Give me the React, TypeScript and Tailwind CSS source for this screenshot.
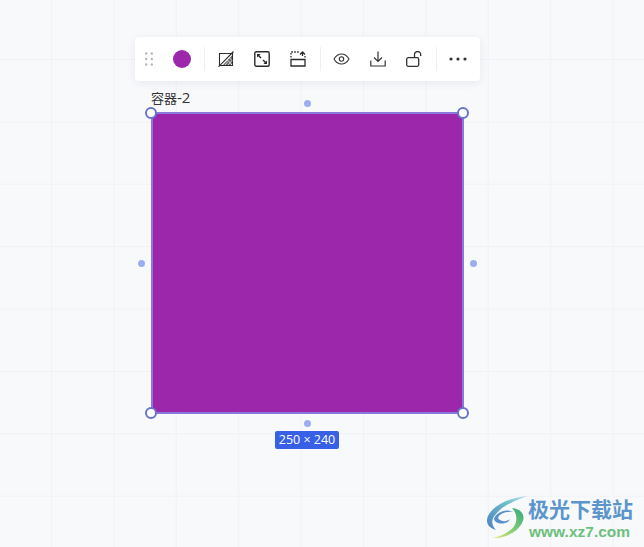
const Sep = ({ cls }: { cls: string }) => <div className={`w-px h-[24px] bg-[#eeeff2] ${cls}`} />;

const ringBase = "absolute w-[12px] h-[12px] rounded-full bg-white border-2 border-[#6674cc]";
const dotBase = "absolute w-[7px] h-[7px] rounded-full bg-[#9daef0]";

export default function App() {
  return (
    <div
      className="relative w-[644px] h-[547px] overflow-hidden flex flex-col items-start pl-[135px] pt-[37px] bg-[#f8f9fb] bg-[linear-gradient(to_right,#f1f2f5_1px,transparent_1px),linear-gradient(to_bottom,#f1f2f5_1px,transparent_1px)] bg-[size:62.4px_62.4px] bg-[position:51px_59px]"
      style={{ fontFamily: '"Open Sans","Noto Sans CJK SC",sans-serif' }}
    >
      {/* toolbar */}
      <div className="w-[345px] h-[44px] shrink-0 flex items-center pl-[10px] bg-white rounded-[4px] shadow-[0_2px_8px_rgba(30,40,80,0.08)]">
        <svg className="w-[8px] h-[14px]" viewBox="0 0 8 14" fill="#b4b7bd">
          <circle cx="1.2" cy="1.5" r="1.2" /><circle cx="6.8" cy="1.5" r="1.2" />
          <circle cx="1.2" cy="7" r="1.2" /><circle cx="6.8" cy="7" r="1.2" />
          <circle cx="1.2" cy="12.5" r="1.2" /><circle cx="6.8" cy="12.5" r="1.2" />
        </svg>
        <div className="ml-[20px] w-[18px] h-[18px] rounded-full bg-[#9c27ab]" />
        <Sep cls="ml-[13px]" />
        <div className="ml-[13px] flex items-center gap-[20px]">
          <svg className="w-[16px] h-[16px]" viewBox="0 0 16 16" fill="none" stroke="#2b2b2b" strokeWidth="1.1">
            <path d="M1.500 2.500h13v12h-13z" />
            <path d="M0.500 15.800 15.500 0.500" />
            <path d="M14 4.500 5 14h9z" fill="#666" stroke="none" />
            <path d="M7 14l3-3.500M10 14l4-4.500M13 14l1-1M9 8.500l5 5.500M11 6.500l3 3" stroke="#fff" strokeWidth="0.7" />
          </svg>
          <svg className="w-[16px] h-[16px]" viewBox="0 0 16 16" fill="none" stroke="#2b2b2b" strokeWidth="1.4">
            <rect x="0.800" y="0.800" width="14.400" height="14.400" rx="1.500" />
            <path d="M4 4 7 7" />
            <path d="M3 3h3.600L3 6.600zM13 13H9.400L13 9.400z" fill="#2b2b2b" stroke="none" />
            <path d="M12 12 9 9" />
          </svg>
          <svg className="w-[16px] h-[16px]" viewBox="0 0 16 16" fill="none" stroke="#2b2b2b" strokeWidth="1.300">
            <path d="M1 6.500V1h8" strokeDasharray="1.600 1.300" />
            <path d="M1 8.500V15h14V8.500z" />
            <path d="M15 6.500V5" />
            <path d="M10 3.500 12.500 1 15 3.500M12.500 1.200V5" />
          </svg>
        </div>
        <Sep cls="ml-[14px]" />
        <div className="ml-[12px] flex items-center gap-[20px]">
          <svg className="w-[17px] h-[16px]" viewBox="0 0 17 16" fill="none" stroke="#333" strokeWidth="1.100">
            <path d="M1 8c2-3.400 4.500-5 7.500-5S14 4.600 16 8c-2 3.400-4.500 5-7.500 5S3 11.400 1 8z" />
            <circle cx="8.500" cy="8" r="2.200" />
          </svg>
          <svg className="w-[16px] h-[16px]" viewBox="0 0 16 16" fill="none" stroke="#333" strokeWidth="1.200">
            <path d="M8 0.500V10M4 6.500 8 10.500l4-4" />
            <path d="M0.800 9.500V15h14.400V9.500" />
          </svg>
          <svg className="w-[16px] h-[16px]" viewBox="0 0 16 16" fill="none" stroke="#333" strokeWidth="1.300">
            <rect x="0.700" y="6.700" width="12" height="8.600" rx="1.500" />
            <path d="M8.500 6.700V3.600a3.100 3.100 0 0 1 6.200 0v1.400" />
          </svg>
        </div>
        <Sep cls="ml-[14px]" />
        <svg className="ml-[12px] w-[18px] h-[4px]" viewBox="0 0 18 4" fill="#333">
          <circle cx="2" cy="2" r="1.600" /><circle cx="9" cy="2" r="1.600" /><circle cx="16" cy="2" r="1.600" />
        </svg>
      </div>

      {/* label */}
      <div className="ml-[16px] mt-[8px] mb-[4px] h-[19px] text-[13px] leading-[18px] text-[#333] whitespace-nowrap">
        容器<span className="text-[15px] leading-none">-2</span>
      </div>

      {/* selected container with its handles */}
      <div className="relative ml-[16px] w-[313px] h-[302px] shrink-0 bg-[#9c27ab] border-2 border-[#8a78dc]">
        <div className={`${ringBase} -left-[8px] -top-[7px]`} />
        <div className={`${ringBase} -right-[7px] -top-[7px]`} />
        <div className={`${ringBase} -left-[8px] -bottom-[7px]`} />
        <div className={`${ringBase} -right-[7px] -bottom-[7px]`} />
        <div className={`${dotBase} left-[151px] -top-[14px]`} />
        <div className={`${dotBase} left-[151px] -bottom-[15px]`} />
        <div className={`${dotBase} -left-[15px] top-[146px]`} />
        <div className={`${dotBase} -right-[15px] top-[146px]`} />
      </div>

      {/* size tag */}
      <div className="ml-[140px] mt-[17px] w-[64px] h-[18px] flex items-center justify-center rounded-[2px] bg-[#3860e6] text-white text-[12.500px] leading-none whitespace-nowrap">
        250 × 240
      </div>

      {/* watermark */}
      <div className="absolute left-[484px] top-[495px] flex items-start">
        <svg className="w-[44px] h-[46px] shrink-0" viewBox="0 0 44 46" fill="none">
          <defs>
            <linearGradient id="a" x1="44" y1="0" x2="4" y2="34" gradientUnits="userSpaceOnUse">
              <stop offset="0" stopColor="#cfe3f2" />
              <stop offset="0.4" stopColor="#6fc0c8" />
              <stop offset="1" stopColor="#4f84c4" />
            </linearGradient>
            <linearGradient id="b" x1="36" y1="14" x2="8" y2="44" gradientUnits="userSpaceOnUse">
              <stop offset="0" stopColor="#3fae7a" />
              <stop offset="0.55" stopColor="#8fd07a" />
              <stop offset="1" stopColor="#f0e66a" />
            </linearGradient>
          </defs>
          <path d="M44 1C28 2 10 9 4 21c-3 7 1 12 8 14C7 30 7 24 12 19 18 11 32 5 44 1z" fill="url(#a)" />
          <path d="M10 24c2-7 12-11 19-7-7-1-14 2-15 6 2 4 9 4 12 1-2 6-15 6-16 0z" fill="#5a8fce" />
          <path d="M28 13c10 1 14 8 10 15-5 10-18 15-29 15 11-3 21-8 23-16 1-5 0-10-4-14z" fill="url(#b)" />
        </svg>
        <div className="flex flex-col">
          <div className="text-[21px] leading-[26px] font-bold text-[#5b95cb] whitespace-nowrap" style={{ fontFamily: '"Noto Sans CJK SC",sans-serif' }}>极光下载站</div>
          <div className="mt-[3px] ml-[1px] text-[15.500px] leading-[16px] font-bold text-[#6cc07c] whitespace-nowrap" style={{ fontFamily: '"Liberation Sans",sans-serif' }}>www.xz7.com</div>
        </div>
      </div>
    </div>
  );
}
